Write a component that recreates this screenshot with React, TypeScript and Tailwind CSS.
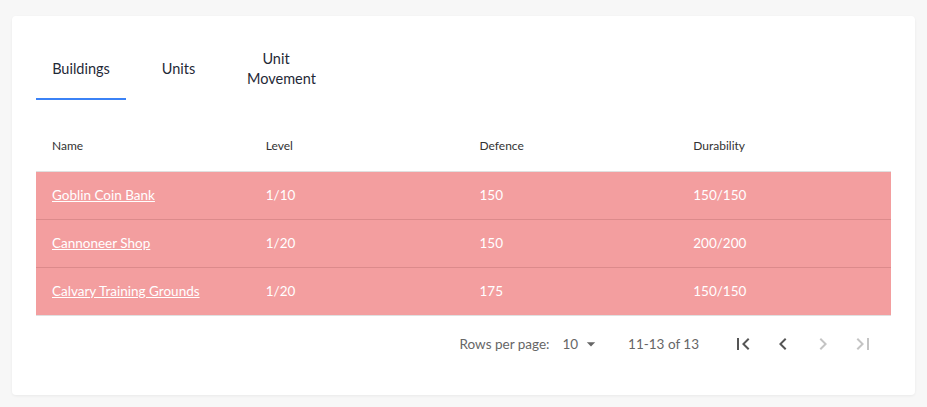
import React, { useState } from 'react'

const rows = [
  { name: 'Goblin Coin Bank', level: '1/10', defence: '150', durability: '150/150' },
  { name: 'Cannoneer Shop', level: '1/20', defence: '150', durability: '200/200' },
  { name: 'Calvary Training Grounds', level: '1/20', defence: '175', durability: '150/150' },
]

const tabs = ['Buildings', 'Units', 'Unit Movement']

function Icon({ d, disabled }: { d: string; disabled?: boolean }) {
  return (
    <button className="w-10 h-10 flex items-center justify-center rounded-full">
      <svg viewBox="0 0 24 24" className={`w-6 h-6 ${disabled ? 'fill-[#c4c4c4]' : 'fill-[#555]'}`}>
        <path d={d} />
      </svg>
    </button>
  )
}

export default function App() {
  const [active, setActive] = useState(0)

  return (
    <div className="min-h-[407px] bg-[#f7f7f7] px-3 pt-4 pb-3 font-['Lato','Noto_Sans',sans-serif]">
      <div className="bg-white rounded shadow-[0_1px_3px_rgba(0,0,0,0.06)] px-6 pt-5 pb-[23px]">
        {/* Tabs */}
        <div className="flex gap-[7.5px] h-16">
          {tabs.map((t, i) => (
            <button
              key={t}
              onClick={() => setActive(i)}
              className={`relative w-[90px] px-4 pt-0.5 text-[14.5px] leading-5 text-[#1f2937] ${
                i === active ? 'after:absolute after:left-0 after:right-0 after:bottom-0 after:h-0.5 after:bg-[#3b82f6]' : ''
              }`}
            >
              {t}
            </button>
          ))}
        </div>

        {/* Table */}
        <div className="mt-[18px]">
          <div className="grid grid-cols-4 h-[54px] items-center pt-0.5 border-b border-[#e0e0e0] text-xs text-[#333]">
            <div className="pl-4">Name</div>
            <div className="pl-4">Level</div>
            <div className="pl-4">Defence</div>
            <div className="pl-4">Durability</div>
          </div>
          {rows.map((r, i) => (
            <div
              key={r.name}
              className={`grid grid-cols-4 h-12 items-center bg-[#f39e9f] text-[13.5px] text-white border-b ${
                i === rows.length - 1 ? 'border-[#e0e0e0]' : 'border-[#dc8a8b]'
              }`}
            >
              <div className="pl-4">
                <a href="#" className="underline">{r.name}</a>
              </div>
              <div className="pl-4">{r.level}</div>
              <div className="pl-4">{r.defence}</div>
              <div className="pl-4">{r.durability}</div>
            </div>
          ))}
        </div>

        {/* Pagination */}
        <div className="h-14 flex items-center justify-end pr-2 text-[13.5px] text-[#666]">
          <span>Rows per page:</span>
          <div className="flex items-center ml-[13px] mr-[27px]">
            <span>10</span>
            <svg viewBox="0 0 24 24" className="w-5 h-5 ml-[3px] fill-[#666]">
              <path d="M7 10l5 5 5-5z" />
            </svg>
          </div>
          <span>11-13 of 13</span>
          <div className="flex ml-6">
            <Icon d="M18.41 16.59L13.82 12l4.59-4.59L17 6l-6 6 6 6zM6 6h2v12H6z" />
            <Icon d="M15.41 7.41L14 6l-6 6 6 6 1.41-1.41L10.83 12z" />
            <Icon d="M10 6L8.59 7.41 13.17 12l-4.58 4.59L10 18l6-6z" disabled />
            <Icon d="M5.59 7.41L10.18 12l-4.59 4.59L7 18l6-6-6-6zM16 6h2v12h-2z" disabled />
          </div>
        </div>
      </div>
    </div>
  )
}
